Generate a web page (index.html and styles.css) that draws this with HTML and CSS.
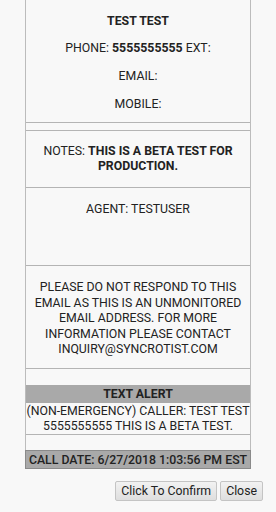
FILE: index.html
```html
<!DOCTYPE html>
<html>
<head>
<meta charset="utf-8">
<link rel="stylesheet" href="styles.css">
</head>
<body>
<div class="card">
  <div class="sec info">
    <p class="b">TEST TEST</p>
    <p>PHONE: <b>5555555555</b> EXT:</p>
    <p>EMAIL:</p>
    <p>MOBILE:</p>
  </div>
  <div class="sec spacer8"></div>
  <div class="sec notes">
    <p>NOTES: <b>THIS IS A BETA TEST FOR PRODUCTION.</b></p>
  </div>
  <div class="sec agent">
    <p>AGENT: TESTUSER</p>
  </div>
  <div class="sec disclaimer">
    <p>PLEASE DO NOT RESPOND TO THIS EMAIL AS THIS IS AN UNMONITORED EMAIL ADDRESS. FOR MORE INFORMATION PLEASE CONTACT INQUIRY@SYNCROTIST.COM</p>
  </div>
  <div class="sec spacer17"></div>
  <div class="bar alert">TEXT ALERT</div>
  <div class="alerttext">(NON-EMERGENCY) CALLER: TEST TEST 5555555555 THIS IS A BETA TEST.</div>
  <div class="sec spacer16"></div>
  <div class="bar date">CALL DATE: 6/27/2018 1:03:56 PM EST</div>
</div>
<div class="actions">
  <button class="btn">Click To Confirm</button>
  <button class="btn">Close</button>
</div>
</body>
</html>
```

FILE: styles.css
```css
html, body {
  margin: 0;
  padding: 0;
  background: #f8f8f8;
}
body {
  font-family: Roboto, "Liberation Sans", sans-serif;
  font-size: 12.3px;
  color: #222;
}
.card {
  margin-left: 25px;
  width: 224px;
  border-left: 1px solid #bcbcbc;
  border-right: 1px solid #bcbcbc;
  text-align: center;
}
.sec p {
  margin: 0;
  line-height: 15px;
}
.b, b {
  font-weight: bold;
}
.info {
  display: flex;
  flex-direction: column;
  gap: 12.8px;
  padding: 13.5px 0 10.5px;
}
.sec + .sec {
  border-top: 1px solid #b4b4b4;
}
.spacer8 {
  height: 7px;
}
.notes {
  padding: 13px 8px 13px;
}
.agent {
  padding: 14px 4px 48px;
}
.disclaimer {
  padding: 14px 4px 10px;
}
.disclaimer p {
  line-height: 15.5px;
}
.spacer17 {
  height: 16px;
}
.bar {
  background: #a9a9a9;
  line-height: 18px;
}
.alert {
  height: 18px;
  font-weight: bold;
}
.alerttext {
  line-height: 15px;
  padding-top: 1px;
  border-bottom: 1px solid #b4b4b4;
}
.spacer16 {
  height: 15px;
}
.date {
  height: 17px;
  line-height: 18px;
  font-weight: 500;
  border: 1px solid #8a8a8a;
  margin: 0 -1px;
  padding: 0 1px;
}
.actions {
  display: flex;
  justify-content: flex-end;
  gap: 3px;
  padding: 12px 13px 0 0;
}
.btn {
  font-family: Roboto, "Liberation Sans", sans-serif;
  font-size: 12.3px;
  color: #222;
  height: 20px;
  padding: 0 5px;
  border: 1px solid #c4c4c4;
  border-radius: 2px;
  background: linear-gradient(#f2f2f2, #dedede);
}
```
